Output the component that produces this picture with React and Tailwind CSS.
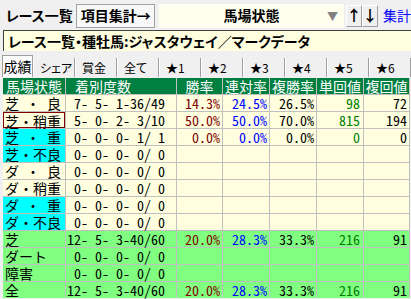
const rows = [
  { label: '芝 ・ 良', cnt: '7- 5- 1-36/49', win: '14.3%', ren: '24.5%', fuku: '26.5%', tan: '98', fk: '72' },
  { label: '芝・稍重', cnt: '5- 0- 2- 3/10', win: '50.0%', ren: '50.0%', fuku: '70.0%', tan: '815', fk: '194', selected: true },
  { label: '芝 ・ 重', cnt: '0- 0- 0- 1/ 1', win: '0.0%', ren: '0.0%', fuku: '0.0%', tan: '0', fk: '0', cyan: true },
  { label: '芝・不良', cnt: '0- 0- 0- 0/ 0', cyan: true },
  { label: 'ダ ・ 良', cnt: '0- 0- 0- 0/ 0' },
  { label: 'ダ・稍重', cnt: '0- 0- 0- 0/ 0' },
  { label: 'ダ ・ 重', cnt: '0- 0- 0- 0/ 0', cyan: true },
  { label: 'ダ・不良', cnt: '0- 0- 0- 0/ 0', cyan: true },
  { label: '芝', cnt: '12- 5- 3-40/60', win: '20.0%', ren: '28.3%', fuku: '33.3%', tan: '216', fk: '91', green: true },
  { label: 'ダート', cnt: '0- 0- 0- 0/ 0', green: true },
  { label: '障害', cnt: '0- 0- 0- 0/ 0', green: true },
  { label: '全', cnt: '12- 5- 3-40/60', win: '20.0%', ren: '28.3%', fuku: '33.3%', tan: '216', fk: '91', green: true },
];

const tabs = ['シェア', '賞金', '全て', '★1', '★2', '★3', '★4', '★5', '★6'];

function Row({ r }) {
  const bg = r.green ? 'bg-[#80ff80]' : 'bg-[#ffffe0]';
  const labelBg = r.green ? 'bg-[#80ff80]' : r.cyan ? 'bg-[#00ffff]' : 'bg-[#ffffe0]';
  return (
    <>
      <div className={`${labelBg} whitespace-pre leading-[16px] ${r.selected ? 'border border-[#800000] pl-[1px] leading-[14px]' : 'pl-[2px]'}`}>
        {r.label}
      </div>
      <div className={`${bg} text-right pr-[11px] whitespace-pre leading-[16px]`}>{r.cnt}</div>
      <div className={`${bg} text-right pr-[2px] text-[#800000] leading-[16px]`}>{r.win}</div>
      <div className={`${bg} text-right pr-[2px] text-[#0000ff] leading-[16px]`}>{r.ren}</div>
      <div className={`${bg} text-right pr-[2px] leading-[16px]`}>{r.fuku}</div>
      <div className={`${bg} text-right pr-[3px] text-[#008000] leading-[16px]`}>{r.tan}</div>
      <div className={`${bg} text-right pr-[2px] leading-[16px]`}>{r.fk}</div>
    </>
  );
}

export default function App() {
  return (
    <div className="w-[411px] h-[299px] overflow-hidden bg-[#f0f0f0] text-black font-['Noto_Sans_Mono_CJK_JP','Noto_Sans_CJK_JP',monospace] text-[14px]">
      {/* toolbar */}
      <div className="flex items-center h-[30px] pt-px">
        <div className="w-[76px] h-[24px] ml-[2px] flex items-center justify-center font-bold text-[14px] [font-feature-settings:'palt'] font-['Noto_Sans_CJK_JP',sans-serif]">
          レース一覧
        </div>
        <div className="w-[80px] h-[24px] flex items-center justify-center font-bold border border-[#a0a0a0] bg-[#f8f8f8] font-['Noto_Sans_CJK_JP',sans-serif]">
          項目集計→
        </div>
        <div className="w-[189px] h-[24px] ml-[4px] bg-[#fffff0] flex items-center justify-center relative font-['Noto_Sans_CJK_JP',sans-serif]">
          <span className="font-bold">馬場状態</span>
          <span className="absolute right-[6px] top-[4px] text-[#808080] text-[11px]">▼</span>
        </div>
        <div className="w-[16px] h-[22px] ml-[2px] flex items-center justify-center font-bold border border-[#a0a0a0] border-t-white border-l-white bg-[#f0f0f0] text-[15px]">↑</div>
        <div className="w-[16px] h-[22px] flex items-center justify-center font-bold border border-[#a0a0a0] border-t-white border-l-white bg-[#f0f0f0] text-[15px]">↓</div>
        <div className="ml-[5px] text-[#0000ff] whitespace-nowrap font-['Noto_Sans_CJK_JP',sans-serif]">集計</div>
      </div>

      {/* title */}
      <div className="ml-[3px] h-[21px] border-t border-l border-[#404040] bg-[#ffffe0] flex items-center pl-[4px] font-bold text-[14px] [font-feature-settings:'palt'] font-['Noto_Sans_CJK_JP',sans-serif] whitespace-nowrap">
        レース一覧・種牡馬:ジャスタウェイ／マークデータ
      </div>

      {/* tabs */}
      <div className="flex items-end h-[26px] pl-[2px] font-['Noto_Sans_CJK_JP',sans-serif]">
        <div className="w-[43px] h-[22px] bg-[#fcfcfc] border border-b-0 border-[#a0a0a0] flex items-center justify-center text-[14px]">
          成績
        </div>
        {tabs.map((t) => (
          <div
            key={t}
            className="w-[42px] h-[19px] shrink-0 border-l border-white border-r border-r-[#a0a0a0] flex items-center pl-[6px] text-[12px] [font-feature-settings:'palt']"
          >
            {t}
          </div>
        ))}
      </div>

      {/* table */}
      <div className="ml-[3px] mt-px w-[407px] grid grid-cols-[62px_110px_45px_46px_46px_46px_45px] auto-rows-[16px] gap-px bg-[#c0c0c0] pr-px">
        <div className="bg-[#008040] text-white text-center leading-[16px]">馬場状態</div>
        <div className="bg-[#008040] text-white pl-[9px] leading-[16px]">着別度数</div>
        <div className="bg-[#008040] text-white text-center leading-[16px]">勝率</div>
        <div className="bg-[#008040] text-white text-center leading-[16px]">連対率</div>
        <div className="bg-[#008040] text-white text-center leading-[16px]">複勝率</div>
        <div className="bg-[#008040] text-white text-center leading-[16px]">単回値</div>
        <div className="bg-[#008040] text-white text-center leading-[16px]">複回値</div>
        {rows.map((r) => (
          <Row key={r.label} r={r} />
        ))}
      </div>
    </div>
  );
}
